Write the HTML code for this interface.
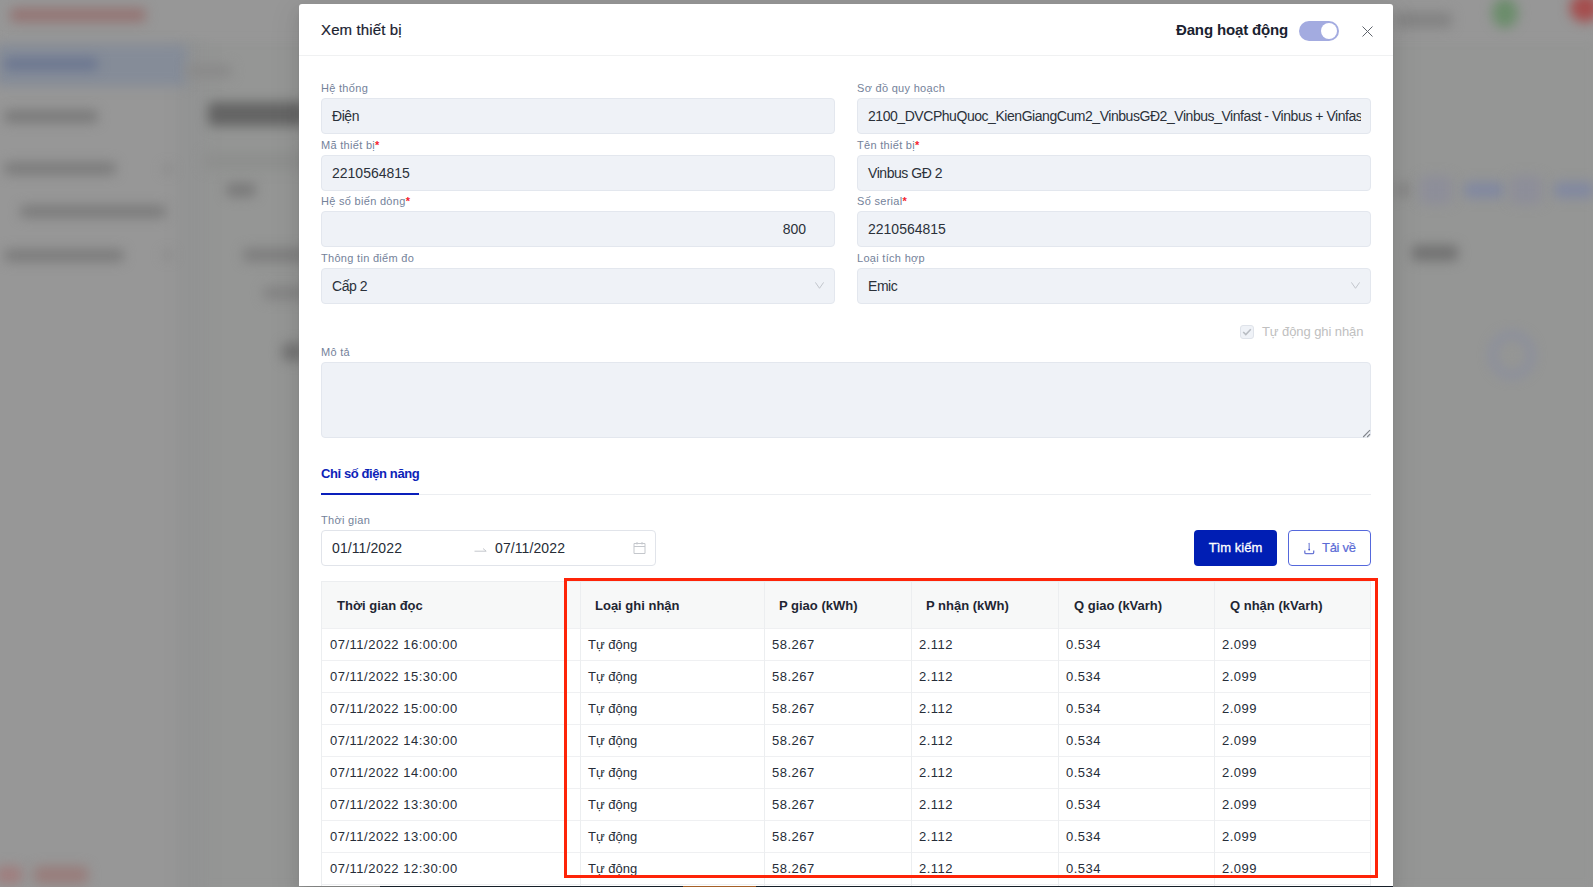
<!DOCTYPE html>
<html><head><meta charset="utf-8">
<style>
*{box-sizing:border-box;margin:0;padding:0}
html,body{width:1593px;height:887px;overflow:hidden}
body{font-family:"Liberation Sans",sans-serif;background:#959595;position:relative;color:#1f2633}
.bg{position:absolute;left:0;top:0;width:1593px;height:887px;overflow:hidden}
.bl{position:absolute;filter:blur(6px);border-radius:5px}
.a{position:absolute}
.modal{position:absolute;left:299px;top:4px;width:1094px;height:882px;background:#fff;border-radius:3px 3px 0 0;box-shadow:0 6px 16px rgba(0,0,0,.08),0 3px 6px -4px rgba(0,0,0,.12),0 9px 28px 8px rgba(0,0,0,.05)}
.hline{position:absolute;left:299px;top:55px;width:1094px;height:1px;background:#f0f1f2}
.title{position:absolute;left:321px;top:21px;font-size:15px;line-height:18px;color:#1a2230;letter-spacing:0.13px;-webkit-text-stroke:0.2px #1a2230}
.status{position:absolute;left:1176px;top:21px;font-size:15px;line-height:18px;font-weight:bold;color:#1a2230;letter-spacing:-0.15px}
.tgl{position:absolute;left:1299px;top:21px;width:40px;height:20px;border-radius:10px;background:#a3abe0}
.tgl i{position:absolute;right:2px;top:2px;width:16px;height:16px;border-radius:50%;background:#fff}
.close{position:absolute;left:1362px;top:26px;width:11px;height:11px}
.lbl{position:absolute;font-size:11px;line-height:13px;color:#74829a;white-space:nowrap;letter-spacing:0.3px}
.lbl b{color:#f5222d;font-weight:bold}
.inp{position:absolute;height:36px;width:514px;background:#eff2f7;border:1px solid #e3e7ee;border-radius:4px;font-size:14px;line-height:35px;padding-left:10px;color:#2b313a;white-space:nowrap;overflow:hidden;letter-spacing:-0.45px}
.dg{letter-spacing:0}
.chev{position:absolute;width:9px;height:7px}
.th{position:absolute;top:598px;font-size:13px;line-height:16px;font-weight:bold;color:#1f2633;white-space:nowrap}
.td{position:absolute;font-size:13px;line-height:16px;color:#262d38;white-space:nowrap;letter-spacing:0.5px}
.td.tx{letter-spacing:0}
</style></head><body>
<div class="bg">
<div class="a" style="left:0;top:0;width:1593px;height:887px;background:#979797"></div>
<div class="a" style="left:200px;top:40px;width:1393px;height:847px;background:#959695;filter:blur(4px)"></div>
<div class="a" style="left:178px;top:30px;width:30px;height:887px;background:#929393;filter:blur(6px)"></div>
<div class="a" style="left:0;top:-10px;width:1593px;height:50px;background:#979797;filter:blur(4px)"></div>
<div class="bl" style="left:10px;top:8px;width:136px;height:14px;background:#947473"></div>
<div class="bl" style="left:-5px;top:44px;width:192px;height:42px;background:#858c98"></div>
<div class="bl" style="left:4px;top:58px;width:94px;height:12px;background:#6a7590"></div>
<div class="bl" style="left:186px;top:64px;width:46px;height:14px;background:#8a8a8a"></div>
<div class="bl" style="left:4px;top:110px;width:94px;height:13px;background:#7a7a7a"></div>
<div class="bl" style="left:4px;top:162px;width:112px;height:13px;background:#7c7c7c"></div>
<div class="bl" style="left:20px;top:205px;width:146px;height:13px;background:#7c7c7c"></div>
<div class="bl" style="left:4px;top:249px;width:120px;height:13px;background:#7c7c7c"></div>
<div class="bl" style="left:163px;top:165px;width:10px;height:8px;background:#8a8a8a"></div>
<div class="bl" style="left:163px;top:251px;width:10px;height:8px;background:#8a8a8a"></div>
<div class="bl" style="left:208px;top:102px;width:97px;height:24px;background:#646464"></div>
<div class="bl" style="left:203px;top:152px;width:102px;height:18px;background:#8e8f8e"></div>
<div class="bl" style="left:226px;top:183px;width:30px;height:14px;background:#7a7a7a"></div>
<div class="bl" style="left:243px;top:248px;width:62px;height:14px;background:#7e7e7e"></div>
<div class="bl" style="left:263px;top:286px;width:42px;height:14px;background:#848484"></div>
<div class="bl" style="left:282px;top:343px;width:22px;height:18px;background:#747474"></div>
<div class="bl" style="left:1396px;top:12px;width:56px;height:16px;background:#838383"></div>
<div class="bl" style="left:1492px;top:-2px;width:26px;height:30px;border-radius:50%;background:#6b8d6b"></div>
<div class="bl" style="left:1570px;top:-6px;width:30px;height:28px;border-radius:50%;background:#a54e4e"></div>
<div class="bl" style="left:1396px;top:182px;width:14px;height:16px;background:#858585"></div>
<div class="bl" style="left:1420px;top:176px;width:32px;height:28px;background:#8d8e99"></div>
<div class="bl" style="left:1464px;top:182px;width:40px;height:16px;background:#8188a0"></div>
<div class="bl" style="left:1510px;top:176px;width:32px;height:28px;background:#8d8e99"></div>
<div class="bl" style="left:1554px;top:182px;width:40px;height:16px;background:#8188a0"></div>
<div class="bl" style="left:1412px;top:245px;width:46px;height:16px;background:#727272"></div>
<div class="bl" style="left:1490px;top:332px;width:44px;height:46px;border-radius:50%;border:5px solid #868ba2;background:transparent"></div>
<div class="bl" style="left:-4px;top:866px;width:26px;height:18px;background:#9f7e7e"></div>
<div class="bl" style="left:34px;top:866px;width:54px;height:18px;background:#987d7b"></div>
<div class="a" style="left:380px;top:886px;width:1013px;height:1px;background:#1b2530"></div>
<div class="a" style="left:683px;top:886px;width:73px;height:1px;background:#c07030"></div>
</div>
<div class="modal"></div>
<div class="hline"></div>
<div class="title">Xem thiết bị</div>
<div class="status">Đang hoạt động</div>
<div class="tgl"><i></i></div>
<svg class="close" viewBox="0 0 11 11"><path d="M0.5 0.5L10.5 10.5M10.5 0.5L0.5 10.5" stroke="#5f646c" stroke-width="1" fill="none"/></svg>

<div class="lbl" style="left:321px;top:82px">Hệ thống</div>
<div class="inp" style="left:321px;top:98px">Điện</div>
<div class="lbl" style="left:857px;top:82px">Sơ đồ quy hoạch</div>
<div class="inp" style="left:857px;top:98px"><div style="width:493px;overflow:hidden">2100_DVCPhuQuoc_KienGiangCum2_VinbusGĐ2_Vinbus_Vinfast - Vinbus + Vinfast</div></div>

<div class="lbl" style="left:321px;top:139px">Mã thiết bị<b>*</b></div>
<div class="inp dg" style="left:321px;top:155px">2210564815</div>
<div class="lbl" style="left:857px;top:139px">Tên thiết bị<b>*</b></div>
<div class="inp" style="left:857px;top:155px">Vinbus GĐ 2</div>

<div class="lbl" style="left:321px;top:195px">Hệ số biến dòng<b>*</b></div>
<div class="inp dg" style="left:321px;top:211px;text-align:right;padding-right:28px">800</div>
<div class="lbl" style="left:857px;top:195px">Số serial<b>*</b></div>
<div class="inp dg" style="left:857px;top:211px">2210564815</div>

<div class="lbl" style="left:321px;top:252px">Thông tin điểm đo</div>
<div class="inp" style="left:321px;top:268px">Cấp 2</div>
<svg class="chev" style="left:815px;top:282px" viewBox="0 0 9 7"><path d="M0.4 0.4L4.5 6.3L8.6 0.4" stroke="#c2c6cc" stroke-width="1" fill="none"/></svg>
<div class="lbl" style="left:857px;top:252px">Loại tích hợp</div>
<div class="inp" style="left:857px;top:268px">Emic</div>
<svg class="chev" style="left:1351px;top:282px" viewBox="0 0 9 7"><path d="M0.4 0.4L4.5 6.3L8.6 0.4" stroke="#c2c6cc" stroke-width="1" fill="none"/></svg>

<div class="a" style="left:1240px;top:325px;width:14px;height:14px;border:1px solid #dfe3ea;background:#eff2f7;border-radius:3px"></div>
<svg class="a" style="left:1242px;top:328px;width:10px;height:8px" viewBox="0 0 10 8"><path d="M1.2 4L3.8 6.5L8.8 1.3" stroke="#b8bcc2" stroke-width="1.6" fill="none"/></svg>
<div class="a" style="left:1262px;top:324px;font-size:13px;line-height:16px;color:#c0c0c0;letter-spacing:-0.08px">Tự động ghi nhận</div>

<div class="lbl" style="left:321px;top:346px">Mô tả</div>
<div class="inp" style="left:321px;top:362px;width:1050px;height:76px"></div>
<svg class="a" style="left:1362px;top:429px;width:9px;height:9px" viewBox="0 0 9 9"><path d="M8 1.2L1.2 8M8 5.2L5.2 8" stroke="#80848b" stroke-width="1.1" fill="none"/></svg>

<div class="a" style="left:321px;top:466px;font-size:13px;line-height:16px;font-weight:bold;color:#0c23b8;letter-spacing:-0.4px">Chỉ số điện năng</div>
<div class="a" style="left:321px;top:494px;width:1050px;height:1px;background:#eceef1"></div>
<div class="a" style="left:321px;top:493px;width:98px;height:2px;background:#0a1fbb"></div>

<div class="lbl" style="left:321px;top:514px">Thời gian</div>
<div class="a" style="left:321px;top:530px;width:335px;height:36px;border:1px solid #e1e4ea;border-radius:4px;background:#fff"></div>
<div class="a" style="left:332px;top:539px;font-size:14px;line-height:18px;color:#262c36;letter-spacing:0.1px">01/11/2022</div>
<svg class="a" style="left:474px;top:546px;width:13px;height:6px" viewBox="0 0 13 6"><path d="M0.5 5.2H12.2L9 2.5" stroke="#c4c7cc" stroke-width="1" fill="none"/></svg>
<div class="a" style="left:495px;top:539px;font-size:14px;line-height:18px;color:#262c36;letter-spacing:0.1px">07/11/2022</div>
<svg class="a" style="left:633px;top:542px;width:13px;height:12px" viewBox="0 0 13 12"><path d="M1 1.5H12V11.5H1Z M1 4.5H12 M4 0V2.5 M9 0V2.5" stroke="#c4c7cc" stroke-width="1" fill="none"/></svg>

<div class="a" style="left:1194px;top:530px;width:83px;height:36px;background:#001eb4;border-radius:4px;color:#fff;font-size:13px;line-height:36px;text-align:center;-webkit-text-stroke:0.3px #fff">Tìm kiếm</div>
<div class="a" style="left:1288px;top:530px;width:83px;height:36px;border:1px solid #5568dc;border-radius:4px"></div>
<div class="a" style="left:1322px;top:539px;color:#5b6bd6;font-size:13px;line-height:18px;letter-spacing:-0.3px;-webkit-text-stroke:0.2px #5b6bd6">Tải về</div>
<svg class="a" style="left:1303px;top:542px;width:13px;height:13px" viewBox="0 0 13 13"><path d="M6.2 1.3V7.6" stroke="#8a94dc" stroke-width="1.3" stroke-linecap="round" fill="none"/><circle cx="6.2" cy="7.6" r="0.9" fill="#4456cc"/><path d="M1.8 8.6V10.4Q1.8 11.7 3.1 11.7H9.4Q10.7 11.7 10.7 10.4V8.6" stroke="#6b78d6" stroke-width="1.3" fill="none"/></svg>
<div class="a" style="left:321px;top:581px;width:1049px;height:47px;background:#f7f8f8"></div>
<div class="a" style="left:321px;top:581px;width:1049px;height:1px;background:#eceef0"></div>
<div class="a" style="left:321px;top:628px;width:1049px;height:1px;background:#eff0f2"></div>
<div class="a" style="left:321px;top:660px;width:1049px;height:1px;background:#eff0f2"></div>
<div class="a" style="left:321px;top:692px;width:1049px;height:1px;background:#eff0f2"></div>
<div class="a" style="left:321px;top:724px;width:1049px;height:1px;background:#eff0f2"></div>
<div class="a" style="left:321px;top:756px;width:1049px;height:1px;background:#eff0f2"></div>
<div class="a" style="left:321px;top:788px;width:1049px;height:1px;background:#eff0f2"></div>
<div class="a" style="left:321px;top:820px;width:1049px;height:1px;background:#eff0f2"></div>
<div class="a" style="left:321px;top:852px;width:1049px;height:1px;background:#eff0f2"></div>
<div class="a" style="left:321px;top:884px;width:1049px;height:1px;background:#eff0f2"></div>
<div class="a" style="left:321px;top:581px;width:1px;height:305px;background:#eceef0"></div>
<div class="a" style="left:580px;top:581px;width:1px;height:305px;background:#eceef0"></div>
<div class="a" style="left:764px;top:581px;width:1px;height:305px;background:#eceef0"></div>
<div class="a" style="left:911px;top:581px;width:1px;height:305px;background:#eceef0"></div>
<div class="a" style="left:1058px;top:581px;width:1px;height:305px;background:#eceef0"></div>
<div class="a" style="left:1214px;top:581px;width:1px;height:305px;background:#eceef0"></div>
<div class="a" style="left:1370px;top:581px;width:1px;height:305px;background:#eceef0"></div>
<div class="th" style="left:337px">Thời gian đọc</div>
<div class="th" style="left:595px">Loại ghi nhận</div>
<div class="th" style="left:779px">P giao (kWh)</div>
<div class="th" style="left:926px">P nhận (kWh)</div>
<div class="th" style="left:1074px">Q giao (kVarh)</div>
<div class="th" style="left:1230px">Q nhận (kVarh)</div>
<div class="td" style="left:330px;top:637px">07/11/2022 16:00:00</div>
<div class="td tx" style="left:588px;top:637px">Tự động</div>
<div class="td" style="left:772px;top:637px">58.267</div>
<div class="td" style="left:919px;top:637px">2.112</div>
<div class="td" style="left:1066px;top:637px">0.534</div>
<div class="td" style="left:1222px;top:637px">2.099</div>
<div class="td" style="left:330px;top:669px">07/11/2022 15:30:00</div>
<div class="td tx" style="left:588px;top:669px">Tự động</div>
<div class="td" style="left:772px;top:669px">58.267</div>
<div class="td" style="left:919px;top:669px">2.112</div>
<div class="td" style="left:1066px;top:669px">0.534</div>
<div class="td" style="left:1222px;top:669px">2.099</div>
<div class="td" style="left:330px;top:701px">07/11/2022 15:00:00</div>
<div class="td tx" style="left:588px;top:701px">Tự động</div>
<div class="td" style="left:772px;top:701px">58.267</div>
<div class="td" style="left:919px;top:701px">2.112</div>
<div class="td" style="left:1066px;top:701px">0.534</div>
<div class="td" style="left:1222px;top:701px">2.099</div>
<div class="td" style="left:330px;top:733px">07/11/2022 14:30:00</div>
<div class="td tx" style="left:588px;top:733px">Tự động</div>
<div class="td" style="left:772px;top:733px">58.267</div>
<div class="td" style="left:919px;top:733px">2.112</div>
<div class="td" style="left:1066px;top:733px">0.534</div>
<div class="td" style="left:1222px;top:733px">2.099</div>
<div class="td" style="left:330px;top:765px">07/11/2022 14:00:00</div>
<div class="td tx" style="left:588px;top:765px">Tự động</div>
<div class="td" style="left:772px;top:765px">58.267</div>
<div class="td" style="left:919px;top:765px">2.112</div>
<div class="td" style="left:1066px;top:765px">0.534</div>
<div class="td" style="left:1222px;top:765px">2.099</div>
<div class="td" style="left:330px;top:797px">07/11/2022 13:30:00</div>
<div class="td tx" style="left:588px;top:797px">Tự động</div>
<div class="td" style="left:772px;top:797px">58.267</div>
<div class="td" style="left:919px;top:797px">2.112</div>
<div class="td" style="left:1066px;top:797px">0.534</div>
<div class="td" style="left:1222px;top:797px">2.099</div>
<div class="td" style="left:330px;top:829px">07/11/2022 13:00:00</div>
<div class="td tx" style="left:588px;top:829px">Tự động</div>
<div class="td" style="left:772px;top:829px">58.267</div>
<div class="td" style="left:919px;top:829px">2.112</div>
<div class="td" style="left:1066px;top:829px">0.534</div>
<div class="td" style="left:1222px;top:829px">2.099</div>
<div class="td" style="left:330px;top:861px">07/11/2022 12:30:00</div>
<div class="td tx" style="left:588px;top:861px">Tự động</div>
<div class="td" style="left:772px;top:861px">58.267</div>
<div class="td" style="left:919px;top:861px">2.112</div>
<div class="td" style="left:1066px;top:861px">0.534</div>
<div class="td" style="left:1222px;top:861px">2.099</div>
<div class="a" style="left:564px;top:578px;width:814px;height:300px;border:3px solid #fe2408"></div>
</body></html>
